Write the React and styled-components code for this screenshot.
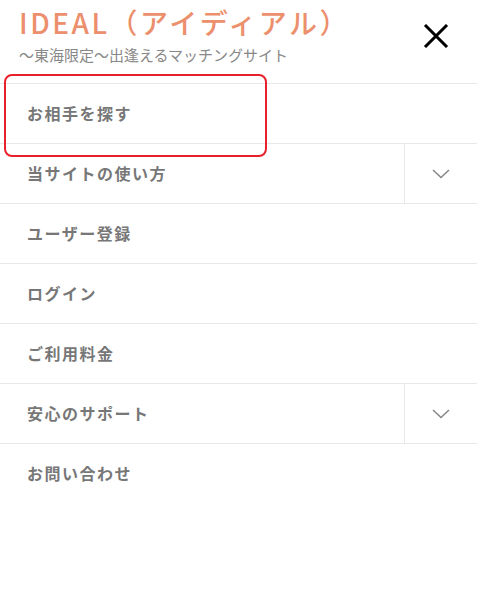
import React from "react";
import styled, { createGlobalStyle } from "styled-components";

const Global = createGlobalStyle`
  html, body { margin: 0; padding: 0; background: #fff; }
  body { font-family: "Noto Sans CJK JP", "Noto Sans", sans-serif; }
  * { box-sizing: border-box; }
`;

const Page = styled.div`
  width: 477px;
  height: 600px;
  background: #fff;
  position: relative;
`;

const Header = styled.header`
  display: flex;
  justify-content: space-between;
  align-items: flex-start;
  padding: 2px 27px 0 19px;
  height: 84px;
  border-bottom: 1px solid #e8e8e8;
`;

const Brand = styled.div`
  display: flex;
  flex-direction: column;
`;

const Title = styled.div`
  font-size: 28px;
  font-weight: 500;
  line-height: 40px;
  color: #ec8f6c;
  letter-spacing: 2.5px;
`;

const Sub = styled.div`
  font-size: 15px;
  line-height: 20px;
  margin-top: 3px;
  color: #888;
`;

const Close = styled.button`
  border: 0;
  background: none;
  padding: 0;
  margin-top: 20px;
  width: 28px;
  height: 28px;
  display: flex;
  align-items: center;
  justify-content: center;
`;

const Menu = styled.ul`
  list-style: none;
  margin: 0;
  padding: 0;
`;

const Item = styled.li`
  display: flex;
  height: 60px;
  border-bottom: ${(p) => (p.$last ? "none" : "1px solid #e8e8e8")};
`;

const Label = styled.a`
  flex: 1;
  display: flex;
  align-items: center;
  padding-left: 27px;
  padding-bottom: 2px;
  font-size: 16px;
  font-weight: 700;
  letter-spacing: 1.5px;
  color: #777;
  text-decoration: none;
`;

const Toggle = styled.span`
  width: 73px;
  display: flex;
  align-items: center;
  justify-content: center;
  border-left: 1px solid #e8e8e8;
`;

const Highlight = styled.div`
  position: absolute;
  left: 4px;
  top: 74px;
  width: 263px;
  height: 83px;
  border: 2px solid #e8202a;
  border-radius: 8px;
  pointer-events: none;
`;

const Chevron = () => (
  <svg width="18" height="10" viewBox="0 0 18 10">
    <path d="M1 1 L9 8.5 L17 1" fill="none" stroke="#888" strokeWidth="1.6" />
  </svg>
);

const items = [
  { t: "お相手を探す" },
  { t: "当サイトの使い方", sub: true },
  { t: "ユーザー登録" },
  { t: "ログイン" },
  { t: "ご利用料金" },
  { t: "安心のサポート", sub: true },
  { t: "お問い合わせ", last: true },
];

export default function App() {
  return (
    <Page>
      <Global />
      <Header>
        <Brand>
          <Title>IDEAL（アイディアル）</Title>
          <Sub>〜東海限定〜出逢えるマッチングサイト</Sub>
        </Brand>
        <Close aria-label="close">
          <svg width="26" height="24" viewBox="0 0 26 24">
            <path d="M2 1 L24 23 M24 1 L2 23" stroke="#000" strokeWidth="3" />
          </svg>
        </Close>
      </Header>
      <Menu>
        {items.map((it) => (
          <Item key={it.t} $last={it.last}>
            <Label href="#">{it.t}</Label>
            {it.sub && (
              <Toggle>
                <Chevron />
              </Toggle>
            )}
          </Item>
        ))}
      </Menu>
      <Highlight />
    </Page>
  );
}
